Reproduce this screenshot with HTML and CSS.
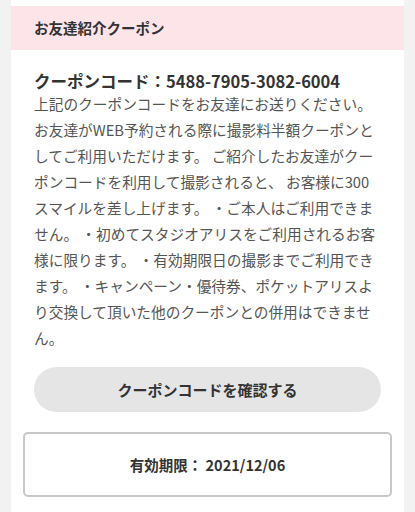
FILE: index.html
```html
<!DOCTYPE html>
<html lang="ja">
  <head>
    <meta charset="UTF-8" />
    <meta name="viewport" content="width=device-width, initial-scale=1.0" />
    <title>お友達紹介クーポン</title>
    <link rel="stylesheet" href="styles.css">
  </head>
  <body>
    <div id="couponCard">
      <h2 class="cardTitle">お友達紹介クーポン</h2>
      <div class="cardBody">
        <p class="couponCode">クーポンコード：5488-7905-3082-6004</p>
        <p class="couponText">上記のクーポンコードをお友達にお送りください。お友達がWEB予約される際に撮影料半額クーポンとしてご利用いただけます。 ご紹介したお友達がクーポンコードを利用して撮影されると、 お客様に300スマイルを差し上げます。 ・ご本人はご利用できません。 ・初めてスタジオアリスをご利用されるお客様に限ります。 ・有効期限日の撮影までご利用できます。 ・キャンペーン・優待券、ポケットアリスより交換して頂いた他のクーポンとの併用はできません。</p>
        <button class="checkBtn">クーポンコードを確認する</button>
      </div>
      <div class="expiryBox">有効期限： 2021/12/06</div>
    </div>
  </body>
</html>
```

FILE: styles.css
```css
body {
  margin: 0;
  background-color: #f2f2f2;
  font-family: "Noto Sans CJK JP", sans-serif;
  color: #333;
}
#couponCard {
  margin: 0 11px;
  padding: 6px 0 15px;
  background-color: white;
}
.cardTitle {
  margin: 0;
  height: 44px;
  line-height: 44px;
  padding-left: 23px;
  background-color: #fde4e9;
  font-size: 14.5px;
  font-weight: bold;
  color: #333;
}
.cardBody {
  padding: 0 23px 0 23px;
}
.couponCode {
  margin: 21px 0 0;
  line-height: 20px;
  font-size: 16.5px;
  font-weight: bold;
  color: #333;
}
.couponText {
  margin: 0;
  line-height: 26px;
  font-size: 14.7px;
  color: #555;
}
.checkBtn {
  display: block;
  width: 100%;
  height: 45px;
  margin-top: 16px;
  border: none;
  border-radius: 23px;
  background-color: #e5e5e5;
  font-family: inherit;
  font-size: 15px;
  font-weight: bold;
  color: #333;
}
.expiryBox {
  margin: 20px 12px 0;
  height: 61px;
  line-height: 61px;
  border: 2px solid #c8c8c8;
  border-radius: 5px;
  text-align: center;
  font-size: 14.5px;
  font-weight: bold;
  color: #333;
}
```
